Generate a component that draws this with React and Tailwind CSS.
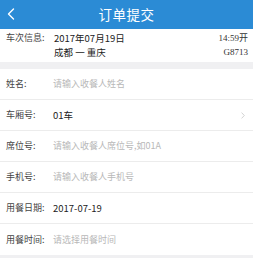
import React from 'react';

const rows = [
  { label: '姓名:', placeholder: '请输入收餐人姓名' },
  { label: '车厢号:', value: '01车', arrow: true },
  { label: '席位号:', placeholder: '请输入收餐人席位号,如01A' },
  { label: '手机号:', placeholder: '请输入收餐人手机号' },
  { label: '用餐日期:', value: '2017-07-19' },
  { label: '用餐时间:', placeholder: '请选择用餐时间' },
];

export default function App() {
  return (
    <div
      className="w-[253px] h-[258px] overflow-hidden bg-[#f0f0f2] text-[#333]"
      style={{ fontFamily: '"Noto Sans CJK SC", "Noto Sans", sans-serif' }}
    >
      {/* title bar */}
      <header className="relative h-[29px] bg-[#2b8bd5] flex items-center justify-center">
        <svg className="absolute left-[7px] top-[8px] w-[8px] h-[12px]" viewBox="0 0 8 12" fill="none">
          <path d="M6.5 1L1.5 6l5 5" stroke="#fff" strokeWidth="1.4" strokeLinecap="round" strokeLinejoin="round" />
        </svg>
        <span className="text-[13.5px] text-white tracking-[0.5px]">订单提交</span>
      </header>

      {/* train info */}
      <section className="h-[33px] bg-white flex pl-[6px] pr-[5px] pt-[2px]">
        <div className="w-[48px] text-[9px] leading-[14px] text-[#444]">车次信息:</div>
        <div className="flex-1 text-[9.5px] leading-[14px] text-[#222]">
          <div>2017年07月19日</div>
          <div>成都 一 重庆</div>
        </div>
        <div
          className="text-right text-[9px] leading-[14px] text-[#333]"
          style={{ fontFamily: '"Liberation Serif", "Noto Sans CJK SC", serif' }}
        >
          <div>14:59开</div>
          <div>G8713</div>
        </div>
      </section>

      <div className="h-[7px]" />

      {/* form */}
      <section className="bg-white">
        {rows.map((r, i) => (
          <div
            key={i}
            className={`h-[31px] flex items-center pl-[6px] pr-[8px] ${i < rows.length - 1 ? 'border-b border-[#ececec]' : ''}`}
          >
            <span className="w-[47px] text-[9px] text-[#444]">{r.label}</span>
            {r.value ? (
              <span className="flex-1 text-[9.5px] text-[#222]">{r.value}</span>
            ) : (
              <span className="flex-1 text-[9px] text-[#b8b8b8]">{r.placeholder}</span>
            )}
            {r.arrow && (
              <svg className="w-[4px] h-[7px]" viewBox="0 0 4 7" fill="none">
                <path d="M0.6 0.6L3.3 3.5 0.6 6.4" stroke="#c8c8c8" strokeWidth="0.8" />
              </svg>
            )}
          </div>
        ))}
      </section>
    </div>
  );
}
